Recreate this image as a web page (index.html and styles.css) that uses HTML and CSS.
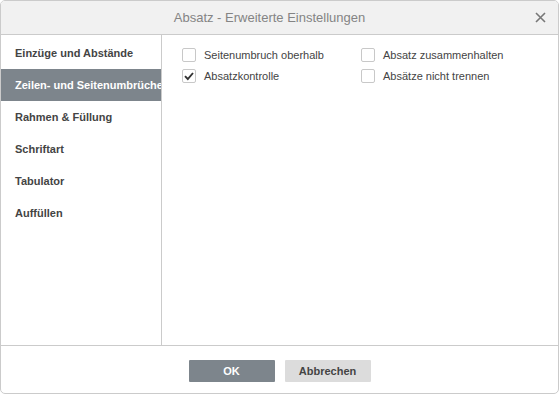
FILE: index.html
```html
<!DOCTYPE html>
<html lang="de">
<head>
    <meta charset="UTF-8">
    <title>Absatz - Erweiterte Einstellungen</title>
    <link rel="stylesheet" href="styles.css">
</head>
<body>
    <div class="dialog">
        <!-- Kopfzeile -->
        <div class="header">
            <span class="title">Absatz - Erweiterte Einstellungen</span>
            <span class="close">
                <svg width="11" height="11" viewBox="0 0 11 11">
                    <path d="M1 1 L10 10 M10 1 L1 10" stroke="#777" stroke-width="1.6" fill="none"/>
                </svg>
            </span>
        </div>

        <div class="body">
            <!-- linkes Menü -->
            <div class="menu">
                <div class="menu-item">Einzüge und Abstände</div>
                <div class="menu-item active">Zeilen- und Seitenumbrüche</div>
                <div class="menu-item">Rahmen &amp; Füllung</div>
                <div class="menu-item">Schriftart</div>
                <div class="menu-item">Tabulator</div>
                <div class="menu-item">Auffüllen</div>
            </div>

            <!-- Inhalt -->
            <div class="content">
                <div class="options">
                    <label class="option"><span class="box"></span>Seitenumbruch oberhalb</label>
                    <label class="option"><span class="box"></span>Absatz zusammenhalten</label>
                    <label class="option"><span class="box checked">
                        <svg width="12" height="12" viewBox="0 0 12 12">
                            <path d="M2 6.2 L4.8 9 L10 3" stroke="#333" stroke-width="1.9" fill="none"/>
                        </svg>
                    </span>Absatzkontrolle</label>
                    <label class="option"><span class="box"></span>Absätze nicht trennen</label>
                </div>
            </div>
        </div>

        <!-- Fußzeile -->
        <div class="footer">
            <button class="btn primary">OK</button>
            <button class="btn">Abbrechen</button>
        </div>
    </div>
</body>
</html>
```

FILE: styles.css
```css
body {
    margin: 0;
    padding: 0;
    background-color: #fff;
    font-family: "Liberation Sans", Arial, sans-serif;
    font-size: 11px;
    color: #444;
}

.dialog {
    width: 559px;
    height: 394px;
    box-sizing: border-box;
    border: 1px solid #cbcbcb;
    border-radius: 5px;
    display: flex;
    flex-direction: column;
    overflow: hidden;
}

/* Kopfzeile */
.header {
    height: 33px;
    flex-shrink: 0;
    background-color: #f1f1f1;
    border-bottom: 1px solid #cbcbcb;
    display: flex;
    align-items: center;
    justify-content: center;
    padding-right: 20px;
    position: relative;
}

.title {
    font-size: 13px;
    color: #848484;
}

.close {
    position: absolute;
    right: 12px;
    top: 11px;
    line-height: 0;
}

/* Hauptbereich */
.body {
    flex: 1;
    display: flex;
    min-height: 0;
}

.menu {
    width: 160px;
    flex-shrink: 0;
    border-right: 1px solid #cbcbcb;
    padding-top: 2px;
    overflow: hidden;
}

.menu-item {
    height: 32px;
    line-height: 32px;
    padding-left: 14px;
    font-weight: bold;
    white-space: nowrap;
    color: #444;
}

.menu-item.active {
    background-color: #7d858c;
    color: #fff;
}

.content {
    flex: 1;
    padding: 13px 0 0 20px;
}

.options {
    display: grid;
    grid-template-columns: 179px 1fr;
    row-gap: 7px;
}

.option {
    display: flex;
    align-items: center;
    height: 14px;
    color: #444;
}

.box {
    width: 12px;
    height: 12px;
    border: 1px solid #c8c8c8;
    border-radius: 2px;
    margin-right: 8px;
    display: flex;
    align-items: center;
    justify-content: center;
    background-color: #fff;
}

/* Fußzeile */
.footer {
    height: 48px;
    flex-shrink: 0;
    border-top: 1px solid #cbcbcb;
    display: flex;
    justify-content: center;
    gap: 10px;
    padding-top: 14px;
    box-sizing: border-box;
}

.btn {
    width: 86px;
    height: 22px;
    border: none;
    border-radius: 1px;
    font-family: "Liberation Sans", Arial, sans-serif;
    font-size: 11px;
    font-weight: bold;
    background-color: #dcdcdc;
    color: #444;
    padding: 0;
}

.btn.primary {
    background-color: #7d858c;
    color: #fff;
}
```
